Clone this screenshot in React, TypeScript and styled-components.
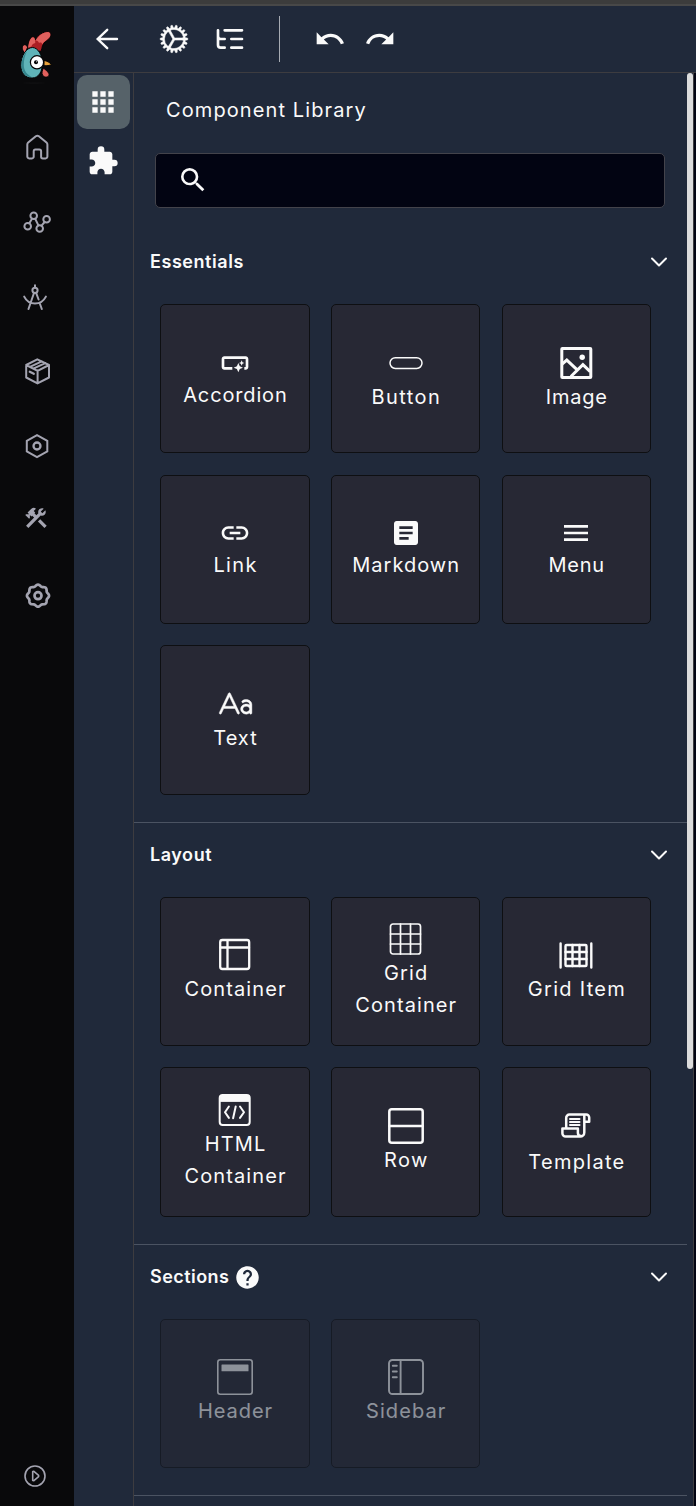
import React from "react";
import styled, { createGlobalStyle } from "styled-components";
import {
  MdApps,
  MdArticle,
  MdConstruction,
  MdExtension,
  MdHelp,
  MdLink,
  MdMenu,
  MdOutlineSmartButton,
  MdRedo,
  MdSearch,
  MdUndo,
} from "react-icons/md";
import { IoCogOutline } from "react-icons/io5";
import { PiTextAa } from "react-icons/pi";

const GlobalStyle = createGlobalStyle`
  * { box-sizing: border-box; }
  body {
    margin: 0;
    background: #20293a;
    color: #fafafa;
    font-family: Inter, "Liberation Sans", sans-serif;
  }
  svg { display: block; flex: none; }
`;

const Page = styled.div`
  display: flex;
  flex-direction: column;
  height: 1506px;
  overflow: hidden;
`;

const WindowEdge = styled.div`
  flex: none;
  height: 6px;
  background: #3c3c3c;
  border-bottom: 2px solid #484848;
`;

const Shell = styled.div`
  display: flex;
  flex: 1;
  min-height: 0;
`;

const NavRail = styled.nav`
  display: flex;
  flex-direction: column;
  align-items: center;
  width: 74px;
  padding: 24px 0 18px;
  background: #09090b;
  color: #a4a4b1;
`;

const LogoSlot = styled.div`
  height: 80px;
`;

const NavItem = styled.div<{ $lift?: number }>`
  display: flex;
  align-items: center;
  justify-content: center;
  width: 74px;
  height: 74.66px;
  padding-bottom: ${(p) => p.$lift ?? 0}px;
  padding-right: ${(p) => (p.$lift ? 2 : 0)}px;
`;

const NavFooter = styled.div`
  margin-top: auto;
  padding-right: 4px;
`;

const Workspace = styled.div`
  display: flex;
  flex-direction: column;
  flex: 1;
`;

const Toolbar = styled.header`
  display: flex;
  align-items: center;
  height: 67px;
  padding-left: 17px;
  border-bottom: 1px solid #3d3c40;
`;

const ToolButton = styled.div<{ $before?: number }>`
  display: flex;
  align-items: center;
  justify-content: center;
  width: 32px;
  height: 32px;
  margin-left: ${(p) => p.$before ?? 0}px;
`;

const ToolDivider = styled.div`
  width: 1px;
  height: 46px;
  margin-left: 33px;
  background: #a7abb3;
`;

const Content = styled.div`
  display: flex;
  flex: 1;
  min-height: 0;
`;

const TabRail = styled.div`
  display: flex;
  flex-direction: column;
  align-items: center;
  width: 60px;
  padding: 2px 1px 0 0;
  border-right: 1px solid #3d3c40;
`;

const Tab = styled.div<{ $active?: boolean }>`
  display: flex;
  align-items: center;
  justify-content: center;
  width: 53px;
  height: 54px;
  border-radius: 10px;
  margin-bottom: 5px;
  background: ${(p) => (p.$active ? "#566269" : "transparent")};
`;

const Panel = styled.main`
  width: 553px;
`;

const ScrollTrack = styled.div`
  width: 7px;
  border-right: 1px solid #3d3c40;
`;

const ScrollThumb = styled.div`
  width: 6px;
  height: 996px;
  border-radius: 3px;
  background: #dcdcdc;
`;

const Outside = styled.div`
  flex: 1;
  background: #020412;
`;

const PanelTitle = styled.h1`
  margin: 0;
  padding: 20px 0 0 32px;
  height: 80px;
  font-size: 20px;
  font-weight: 380;
  line-height: 34px;
  letter-spacing: 1.1px;
`;

const SearchBox = styled.div`
  display: flex;
  align-items: center;
  width: 510px;
  height: 55px;
  margin: 0 0 21.8px 21px;
  padding: 0 0 2px 21px;
  border: 1px solid #43434b;
  border-radius: 5px;
  background: #020412;
`;

const SectionBox = styled.section`
  padding-bottom: 26.87px;
  border-bottom: 1px solid #4b5362;
`;

const SectionHead = styled.div`
  display: flex;
  align-items: center;
  height: 64.9px;
  padding: 0 18px 0 16px;
`;

const SectionTitle = styled.h2<{ $track: number }>`
  margin: 0 5px 1.8px 0;
  font-size: 18px;
  font-weight: 620;
  letter-spacing: ${(p) => p.$track}px;
`;

const ChevronSlot = styled.div`
  margin-left: auto;
`;

const CardGrid = styled.div`
  display: grid;
  grid-template-columns: repeat(3, 149.33px);
  grid-auto-rows: 149.33px;
  gap: 21.33px;
  padding: 9.33px 0 0 26.33px;
`;

const Card = styled.div<{ $muted?: boolean }>`
  display: flex;
  flex-direction: column;
  align-items: center;
  justify-content: center;
  border: 1px solid #0e0f12;
  border-radius: 5px;
  background: #272834;
  opacity: ${(p) => (p.$muted ? 0.5 : 1)};
`;

const CardLabel = styled.span<{ $track: number }>`
  width: min-content;
  font-size: 20px;
  font-weight: 370;
  line-height: 32px;
  letter-spacing: ${(p) => p.$track}px;
  margin-right: -${(p) => p.$track}px;
  text-align: center;
`;

const NoBreak = styled.span`
  white-space: nowrap;
`;

type DrawingProps = { size: number; stroke?: number; children: React.ReactNode };

const Drawing = ({ size, stroke = 2, children }: DrawingProps) => (
  <svg
    width={size}
    height={size}
    viewBox={`0 0 ${size} ${size}`}
    fill="none"
    stroke="currentColor"
    strokeWidth={stroke}
    strokeLinecap="round"
    strokeLinejoin="round"
  >
    {children}
  </svg>
);

const Logo = () => (
  <svg width="36" height="54" viewBox="19 30 36 54">
    <g stroke="#050506" strokeWidth="1" strokeLinejoin="round">
      <path d="M25 53.500C22 50.500 21.300 46 24 44.700c1.800-.4 2.900 1 3.600 2.600z" fill="#e1605d" />
      <path d="M27.500 50C28 43 29.500 37 33 36.800c1.800.1 2.200 1.700 2.400 3C38 34.800 43 31.400 48.300 31.600c2.700.4 3.200 3.400 1.700 5.800-2.100 3.300-6.200 4.300-7.400 8-.7 2.300-.8 4.300-1.600 6z" fill="#ab1f24" />
      <path d="M28.200 47.500c.4-4.700 2-9.800 4.800-10.200 1.900.2 2.300 2.900 2.300 5.700-2 .3-3 1.500-3.900 3.400z" fill="#e1605d" stroke="none" />
      <path d="M35.700 40.500c2.500-4.500 7.600-8.500 12.500-8.400 2.300.4 2.800 2.900 1.500 5-2.100 3.200-5.800 4.200-7.500 7.400-.3-2-1.500-2.300-3.200-1.500-.5-1.700-1.600-2.600-3.300-2.500z" fill="#e1605d" stroke="none" />
      <path d="M32.500 47.500c5.300 0 9.900 7.700 9.900 15.500 0 8.700-3.700 15-10.300 15-7 0-11.300-5-11.300-12.700C20.800 56 26.300 47.500 32.500 47.500z" fill="#5fb3b8" />
      <path d="M27 51c-3.500 3.500-5.500 9-5.500 14 0 7.800 4.500 12.300 10.600 12.300-5-2.600-8.300-6.300-8.300-12.300 0-5 1-9.500 3.200-14z" fill="#34858d" stroke="none" />
      <path d="M43.500 68c-1.500 2.600-2 5.200-1 7 1.200 2.600 5.200 2.900 6.400.4 1-2.500-2.600-4.800-5.400-7.400z" fill="#e1605d" />
      <path d="M44 60.500c3 .3 5.400 2 7.800 4-2.300 1-5 1.500-7.800 1.200z" fill="#e9a23b" />
    </g>
    <circle cx="37" cy="62.300" r="6.600" fill="#fff" stroke="#050506" strokeWidth="1.200" />
    <circle cx="36" cy="62.300" r="2" fill="#050506" />
    <circle cx="36.500" cy="61.800" r=".5" fill="#fff" />
    <ellipse cx="34" cy="83" rx="11" ry="1" fill="#0e0e10" />
  </svg>
);

const HomeIcon = () => (
  <Drawing size={32}>
    <path d="M12.700 25.700a1.700 1.700 0 0 1-1.700 1.700H8.100a1.800 1.800 0 0 1-1.800-1.800V13.500a2.500 2.500 0 0 1 .9-1.900l7.600-6.300a2.500 2.500 0 0 1 3.100 0l7.600 6.300a2.500 2.500 0 0 1 .9 1.900v12.100a1.800 1.800 0 0 1-1.800 1.800h-2.800a1.700 1.700 0 0 1-1.700-1.700v-5.400a1.800 1.800 0 0 0-1.800-1.800h-3.900a1.800 1.800 0 0 0-1.700 1.800z" />
  </Drawing>
);

const NodesIcon = () => (
  <Drawing size={32}>
    <circle cx="6.700" cy="20.300" r="3.300" />
    <circle cx="12.700" cy="9.700" r="3.300" />
    <circle cx="18.700" cy="22.500" r="3.300" />
    <circle cx="25.600" cy="13.300" r="3.300" />
    <path d="M8.300 17.300L11 12.700M14.200 12.800l3.200 6.600M20.600 19.700l3-3.700" />
  </Drawing>
);

const CompassIcon = () => (
  <Drawing size={32} stroke={2}>
    <circle cx="14" cy="9.300" r="2.600" />
    <path d="M14 4.300v2M12.900 12.200L7.500 28M15.200 12.200l2.400 6.300M18.800 22.500l2 5.500M3.200 15.600c2.300 4.600 6 7 10.800 7s8.500-2.400 10.900-7" />
  </Drawing>
);

const BoxIcon = () => (
  <Drawing size={32} stroke={2}>
    <path d="M16.300 4.300l11.700 5.700v12.500l-11.500 5.900L5.200 22.500V10zM5.200 10l11.400 5.800L28 10M16.600 15.800v12.500M9.500 11.700l11.300-5.400M12.800 13.400l11.500-5.300" />
    <path d="M8.800 16.700l4 2" strokeWidth="2.300" />
  </Drawing>
);

const HexIcon = () => (
  <Drawing size={32}>
    <path d="M16 5.200l10.300 5.700v10.400L16 27 5.800 21.300V10.900z" strokeLinejoin="miter" />
    <circle cx="16" cy="16" r="3.500" strokeWidth="2.300" />
  </Drawing>
);

const scallop = Array.from({ length: 96 }, (_, i) => {
  const a = (i / 96) * Math.PI * 2;
  const r = 10.3 + 0.75 * Math.cos(8 * a);
  return `${(17 + r * Math.sin(a)).toFixed(2)},${(16.7 - r * Math.cos(a)).toFixed(2)}`;
}).join(" ");

const SettingsIcon = () => (
  <Drawing size={32} stroke={2.7}>
    <polygon points={scallop} />
    <circle cx="17" cy="16.700" r="3.500" />
  </Drawing>
);

const PlayIcon = () => (
  <Drawing size={24} stroke={1.6}>
    <circle cx="12" cy="12" r="10" />
    <path d="M9.700 7.500v9l1.200.1 4.700-3.900v-1.400l-4.700-3.900z" />
  </Drawing>
);

const BackIcon = () => (
  <Drawing size={32} stroke={2.4}>
    <path d="M16.200 6.800L6.700 16l9.500 9.200M7 16h19" strokeLinejoin="miter" />
  </Drawing>
);

const TreeIcon = () => (
  <svg width="32" height="32" viewBox="0 0 24 24" fill="none" stroke="currentColor" strokeWidth="2" strokeLinecap="round" strokeLinejoin="round">
    <path d="M21 12h-8M21 5.500H8M21 18.500h-8M3 5.500v4.500c0 1.100.9 2 2 2h3M3 10v6.500c0 1.100.9 2 2 2h3" />
  </svg>
);

const ChevronIcon = () => (
  <Drawing size={20}>
    <path d="M3 6.500l7 7 7-7" />
  </Drawing>
);

const ButtonIcon = () => (
  <Drawing size={36} stroke={1.5}>
    <rect x="2" y="12.700" width="32" height="10.700" rx="5.300" />
  </Drawing>
);

const ImageIcon = () => (
  <Drawing size={36} stroke={3}>
    <rect x="3.800" y="3.500" width="29" height="29" rx=".6" />
    <circle cx="24.200" cy="12.300" r="2.700" fill="currentColor" stroke="none" />
    <path d="M3.800 19.300l5-4.200 10.700 10M12.900 31.500l12-11.800 7.300 7" strokeLinejoin="miter" strokeLinecap="butt" />
  </Drawing>
);

const ContainerIcon = () => (
  <Drawing size={36} stroke={2.3}>
    <rect x="3.200" y="3" width="29" height="29" rx="2.200" />
    <path d="M3.500 10.500h28.500M10.500 3.500v28" />
  </Drawing>
);

const GridIcon = () => (
  <Drawing size={36} stroke={1.7}>
    <rect x="2.500" y="3" width="30" height="30" rx="2.500" />
    <path d="M2.500 13h30M2.500 23h30M12.500 3v30M22.500 3v30" />
  </Drawing>
);

const GridItemIcon = () => (
  <Drawing size={36} stroke={2.4}>
    <path d="M2.600 6.500v24M33.300 6.500v24" />
    <rect x="7.500" y="8" width="21" height="21" rx="1" />
    <path d="M7.500 15h21M7.500 22h21M14.500 8v21M21.500 8v21" strokeWidth="2.400" />
  </Drawing>
);

const HtmlIcon = () => (
  <Drawing size={36}>
    <rect x="2.700" y="3" width="30" height="30" rx="3" />
    <path d="M3.200 9V6a2.500 2.500 0 0 1 2.500-2.500h24A2.500 2.500 0 0 1 32.200 6v3z" fill="currentColor" strokeWidth="1" />
    <path d="M11.900 14.500L8 20.200l3.900 5.700M18.700 14.500l-2.600 11.800M23 14.500l4 5.700-4 5.700" />
  </Drawing>
);

const RowIcon = () => (
  <Drawing size={36} stroke={2.5}>
    <rect x="1.300" y="1.300" width="33.400" height="33.400" rx="2.500" />
    <path d="M1.500 18h33" />
  </Drawing>
);

const TemplateIcon = () => (
  <Drawing size={40} stroke={2.5}>
    <path d="M10.200 22.300V12a3.300 3.300 0 0 1 3.300-3.500h16.700a3 3 0 0 1 3 3v4.300h-5M28.300 9.500v17a4 4 0 0 1-4 4H9.700a3.300 3.300 0 0 1-3.300-3.300v-4.700h15.500v4.500a3 3 0 0 0 3 3" />
    <path d="M14 13.100h9.500M14 16.100h9.500M14 19.100h9.500" strokeWidth="2" />
  </Drawing>
);

const HeaderIcon = () => (
  <Drawing size={36} stroke={1.6}>
    <rect x=".8" y=".8" width="34.400" height="34.400" rx="2.500" />
    <rect x="4.500" y="5.500" width="27" height="6.800" rx=".6" fill="currentColor" stroke="none" />
  </Drawing>
);

const SidebarIcon = () => (
  <Drawing size={36} stroke={1.9}>
    <rect x="1" y="1" width="34" height="34" rx="3.500" />
    <path d="M12.600 1v34M4.800 6.800h4M4.800 12.500h4M4.800 18.200h4" />
  </Drawing>
);

type Item = { label: string; icon: React.ReactNode; track?: number };
type SectionData = { title: string; track: number; help?: boolean; muted?: boolean; items: Item[] };

const sections: SectionData[] = [
  {
    title: "Essentials",
    track: 0.55,
    items: [
      { label: "Accordion", icon: <MdOutlineSmartButton size={32} />, track: 0.85 },
      { label: "Button", icon: <ButtonIcon />, track: 1.4 },
      { label: "Image", icon: <ImageIcon />, track: 0.75 },
      { label: "Link", icon: <MdLink size={32} />, track: 1.4 },
      { label: "Markdown", icon: <MdArticle size={32} />, track: 1 },
      { label: "Menu", icon: <MdMenu size={32} />, track: 0.7 },
      {
        label: "Text",
        icon: <PiTextAa size={36} viewBox="-8 0 256 256" stroke="currentColor" strokeWidth={3} />,
        track: 1,
      },
    ],
  },
  {
    title: "Layout",
    track: 0.55,
    items: [
      { label: "Container", icon: <ContainerIcon />, track: 1.1 },
      { label: "Grid Container", icon: <GridIcon />, track: 1.1 },
      { label: "Grid Item", icon: <GridItemIcon />, track: 1.3 },
      { label: "HTML Container", icon: <HtmlIcon />, track: 1.1 },
      { label: "Row", icon: <RowIcon />, track: 1.4 },
      { label: "Template", icon: <TemplateIcon />, track: 1.3 },
    ],
  },
  {
    title: "Sections",
    track: 0.45,
    help: true,
    muted: true,
    items: [
      { label: "Header", icon: <HeaderIcon />, track: 0.95 },
      { label: "Sidebar", icon: <SidebarIcon />, track: 1.1 },
    ],
  },
];

const Section = ({ title, track, help, muted, items }: SectionData) => (
  <SectionBox>
    <SectionHead>
      <SectionTitle $track={track}>{title}</SectionTitle>
      {help && <MdHelp size={27} />}
      <ChevronSlot>
        <ChevronIcon />
      </ChevronSlot>
    </SectionHead>
    <CardGrid>
      {items.map((item) => (
        <Card key={item.label} $muted={muted}>
          {item.icon}
          <CardLabel $track={item.track ?? 0.75}>
            {item.label === "Grid Item" ? <NoBreak>{item.label}</NoBreak> : item.label}
          </CardLabel>
        </Card>
      ))}
    </CardGrid>
  </SectionBox>
);

export default function App() {
  return (
    <>
      <GlobalStyle />
      <Page>
        <WindowEdge />
        <Shell>
          <NavRail>
            <LogoSlot>
              <Logo />
            </LogoSlot>
            <NavItem><HomeIcon /></NavItem>
            <NavItem><NodesIcon /></NavItem>
            <NavItem><CompassIcon /></NavItem>
            <NavItem><BoxIcon /></NavItem>
            <NavItem><HexIcon /></NavItem>
            <NavItem $lift={5}><MdConstruction size={26} /></NavItem>
            <NavItem><SettingsIcon /></NavItem>
            <NavFooter>
              <PlayIcon />
            </NavFooter>
          </NavRail>
          <Workspace>
            <Toolbar>
              <ToolButton><BackIcon /></ToolButton>
              <ToolButton $before={35}><IoCogOutline size={34} stroke="currentColor" strokeWidth={8} /></ToolButton>
              <ToolButton $before={24}><TreeIcon /></ToolButton>
              <ToolDivider />
              <ToolButton $before={34}><MdUndo size={32} /></ToolButton>
              <ToolButton $before={18}><MdRedo size={32} /></ToolButton>
            </Toolbar>
            <Content>
              <TabRail>
                <Tab $active><MdApps size={32} /></Tab>
                <Tab><MdExtension size={32} /></Tab>
              </TabRail>
              <Panel>
                <PanelTitle>Component Library</PanelTitle>
                <SearchBox>
                  <MdSearch size={32} />
                </SearchBox>
                {sections.map((section) => (
                  <Section key={section.title} {...section} />
                ))}
              </Panel>
              <ScrollTrack>
                <ScrollThumb />
              </ScrollTrack>
              <Outside />
            </Content>
          </Workspace>
        </Shell>
      </Page>
    </>
  );
}
